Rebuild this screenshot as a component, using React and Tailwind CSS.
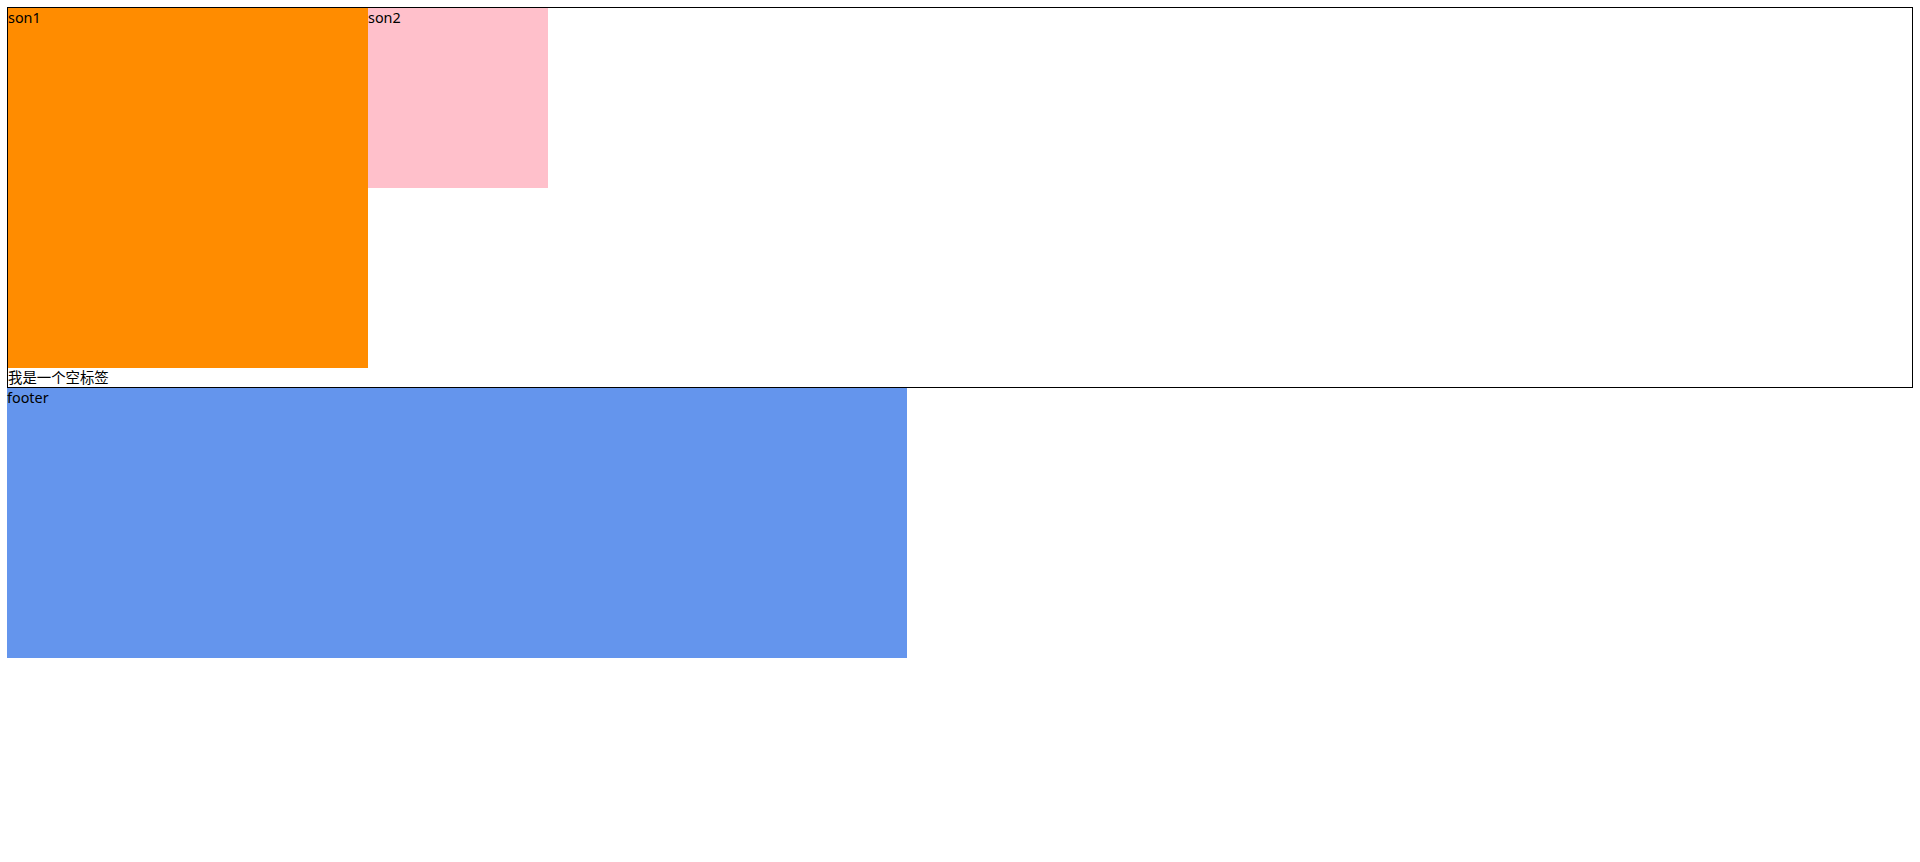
const boxText = "text-[14.4px] leading-[19px] text-black";

export default function App() {
  return (
    <div
      className="min-h-screen bg-white p-[7px]"
      style={{ fontFamily: '"Noto Sans", "Noto Sans CJK SC", sans-serif' }}
    >
      <div className="flex flex-col border border-black">
        <div className="flex items-start">
          <div className={`h-[360px] w-[360px] bg-[#ff8c00] ${boxText}`}>son1</div>
          <div className={`h-[180px] w-[180px] bg-[#ffc0cb] ${boxText}`}>son2</div>
        </div>
        <div className={boxText}>我是一个空标签</div>
      </div>
      <div className={`h-[270px] w-[900px] bg-[#6495ed] ${boxText}`}>footer</div>
    </div>
  );
}
